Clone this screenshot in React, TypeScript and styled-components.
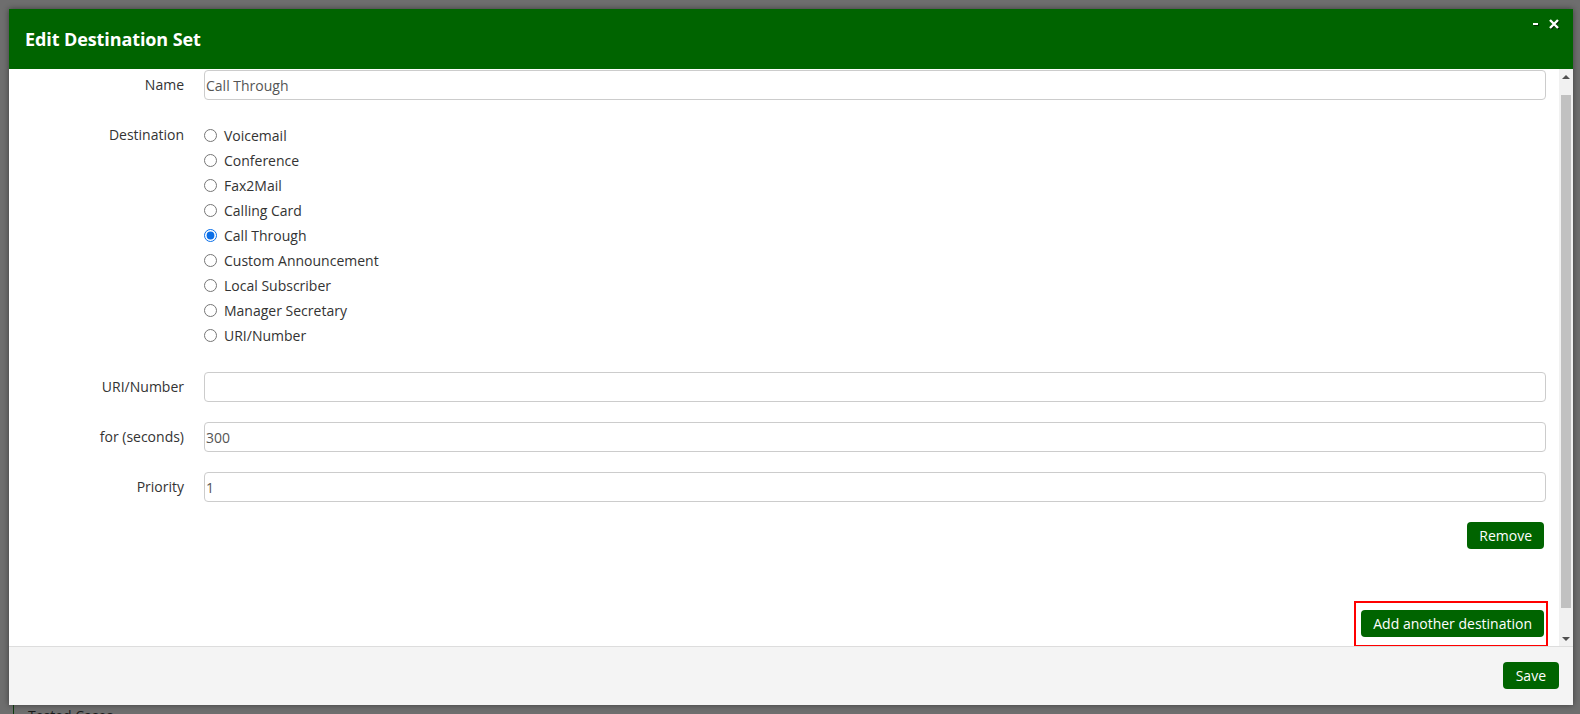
import styled, { createGlobalStyle } from "styled-components";

const GlobalStyle = createGlobalStyle`
  html, body {
    margin: 0;
    padding: 0;
    background: #6e6e6e;
  }
  * {
    box-sizing: border-box;
  }
`;

const destinations = [
  "Voicemail",
  "Conference",
  "Fax2Mail",
  "Calling Card",
  "Call Through",
  "Custom Announcement",
  "Local Subscriber",
  "Manager Secretary",
  "URI/Number",
];

const Screen = styled.div`
  width: 1580px;
  height: 714px;
  overflow: hidden;
  background: #6e6e6e;
  padding: 9px 7px 0 9px;
  font-family: "Open Sans", "Liberation Sans", sans-serif;
  font-size: 14px;
`;

const Dialog = styled.div`
  width: 1564px;
  height: 696px;
  display: flex;
  flex-direction: column;
  background: #fff;
  box-shadow: 0 0 6px rgba(0, 0, 0, 0.45);
`;

const Header = styled.div`
  height: 60px;
  flex: none;
  background: #006400;
  display: flex;
  align-items: center;
  justify-content: space-between;
  padding: 0 14px 0 16px;
`;

const Title = styled.h1`
  margin: 0;
  color: #fff;
  font-size: 18px;
  font-weight: 700;
  letter-spacing: -0.1px;
`;

const Controls = styled.div`
  align-self: flex-start;
  display: flex;
  align-items: center;
  gap: 11px;
  margin-top: 10px;
`;

const Minimize = styled.span`
  display: block;
  width: 5px;
  height: 2px;
  background: #fff;
  box-shadow: 1px 1px 1px rgba(0, 0, 0, 0.6);
`;

const CloseIcon = styled.svg`
  display: block;
  filter: drop-shadow(1px 1px 0.5px rgba(0, 0, 0, 0.6));
`;

const Body = styled.div`
  flex: 1;
  display: flex;
  min-height: 0;
`;

const Content = styled.div`
  flex: 1;
  padding: 1px 13px 0 0;
  display: flex;
  flex-direction: column;
`;

const Row = styled.div<{ $gap?: number }>`
  display: grid;
  grid-template-columns: 175px 1fr;
  column-gap: 20px;
  margin-bottom: ${(p) => p.$gap ?? 20}px;
`;

const Label = styled.label<{ $lh?: number }>`
  text-align: right;
  color: #333;
  line-height: ${(p) => p.$lh ?? 30}px;
`;

const Input = styled.input`
  height: 30px;
  width: 100%;
  border: 1px solid #ccc;
  border-radius: 4px;
  padding: 0 1px;
  font-family: "Open Sans", "Liberation Sans", sans-serif;
  font-size: 14px;
  color: #555;
  background: #fff;
  outline: none;
`;

const RadioList = styled.div`
  display: flex;
  flex-direction: column;
  padding: 3px 0 4px;
`;

const RadioItem = styled.label`
  display: flex;
  align-items: center;
  height: 25px;
  color: #333;
  gap: 7px;
`;

const Radio = styled.input`
  margin: 0;
  width: 13px;
  height: 13px;
  accent-color: #0b6fe8;
`;

const ButtonRow = styled.div<{ $top: number }>`
  display: flex;
  justify-content: flex-end;
  padding-right: 2px;
  margin-top: ${(p) => p.$top}px;
`;

const GreenButton = styled.button<{ $pad?: number }>`
  height: 27px;
  padding: 0 ${(p) => p.$pad ?? 12}px;
  border: none;
  border-radius: 4px;
  background: #006400;
  color: #fff;
  font-family: "Open Sans", "Liberation Sans", sans-serif;
  font-size: 14px;
  cursor: pointer;
`;

const Highlight = styled.div`
  border: 2px solid #f00;
  padding: 7px 2px 8px 5px;
  margin-right: -4px;
`;

const ScrollBar = styled.div`
  width: 14px;
  flex: none;
  background: #f1f1f1;
  display: flex;
  flex-direction: column;
`;

const Arrow = styled.div<{ $down?: boolean }>`
  height: 15px;
  flex: none;
  display: flex;
  align-items: center;
  justify-content: center;
  &::after {
    content: "";
    border-left: 4px solid transparent;
    border-right: 4px solid transparent;
    ${(p) =>
      p.$down
        ? "border-top: 4px solid #505050;"
        : "border-bottom: 4px solid #505050;"}
  }
`;

const Track = styled.div`
  flex: 1;
  padding: 11px 2px 0 2px;
`;

const Thumb = styled.div`
  height: 513px;
  background: #c1c1c1;
`;

const Footer = styled.div`
  height: 59px;
  flex: none;
  background: #f4f4f4;
  border-top: 1px solid #ddd;
  display: flex;
  justify-content: flex-end;
  align-items: flex-start;
  padding: 15px 14px 0 0;
`;

const Behind = styled.div`
  margin-left: 4px;
  border-left: 1px solid #0d3a0d;
  height: 20px;
  padding: 1px 0 0 14px;
  color: #1a1a1a;
  font-size: 14px;
`;

export default function App() {
  return (
    <Screen>
      <GlobalStyle />
      <Dialog>
        <Header>
          <Title>Edit Destination Set</Title>
          <Controls>
            <Minimize />
            <CloseIcon width="10" height="10" viewBox="0 0 10 10">
              <path d="M1 1 L9 9 M9 1 L1 9" stroke="#fff" strokeWidth="2.4" />
            </CloseIcon>
          </Controls>
        </Header>
        <Body>
          <Content>
            <Row>
              <Label>Name</Label>
              <Input defaultValue="Call Through" />
            </Row>
            <Row>
              <Label $lh={29}>Destination</Label>
              <RadioList>
                {destinations.map((d) => (
                  <RadioItem key={d}>
                    <Radio type="radio" name="dest" defaultChecked={d === "Call Through"} />
                    {d}
                  </RadioItem>
                ))}
              </RadioList>
            </Row>
            <Row>
              <Label>URI/Number</Label>
              <Input defaultValue="" />
            </Row>
            <Row>
              <Label>for (seconds)</Label>
              <Input defaultValue="300" />
            </Row>
            <Row $gap={0}>
              <Label>Priority</Label>
              <Input defaultValue="1" />
            </Row>
            <ButtonRow $top={20}>
              <GreenButton>Remove</GreenButton>
            </ButtonRow>
            <ButtonRow $top={52}>
              <Highlight>
                <GreenButton>Add another destination</GreenButton>
              </Highlight>
            </ButtonRow>
          </Content>
          <ScrollBar>
            <Arrow />
            <Track>
              <Thumb />
            </Track>
            <Arrow $down />
          </ScrollBar>
        </Body>
        <Footer>
          <GreenButton $pad={13}>Save</GreenButton>
        </Footer>
      </Dialog>
      <Behind>Tested Cases</Behind>
    </Screen>
  );
}
